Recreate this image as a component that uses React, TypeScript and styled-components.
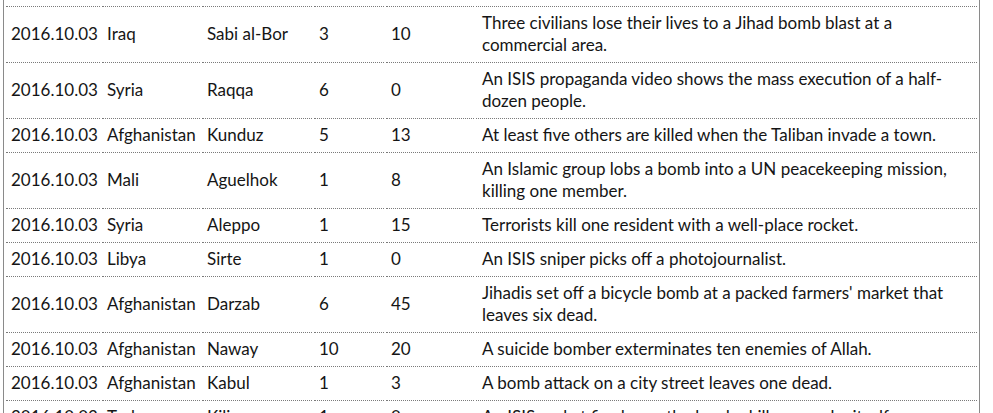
import React from 'react';
import styled, { createGlobalStyle } from 'styled-components';

const GlobalStyle = createGlobalStyle`
	html, body {
		margin: 0;
		padding: 0;
		background: #ffffff;
	}
`;

const Viewport = styled.div`
	height: 413px;
	overflow: hidden;
	padding: 4px 0 0 3px;
	box-sizing: border-box;
	font-family: 'Lato', 'Liberation Sans', sans-serif;
	font-size: 17px;
	color: #151515;
`;

const Table = styled.table`
	width: 977px;
	border-collapse: separate;
	border-spacing: 2px;
	border: 1px solid #8a8a8a;
	border-top: none;
	margin-top: -4px;
	padding-top: 4px;
	table-layout: fixed;
`;

const Col = styled.col<{ $w?: number }>`
	width: ${p => (p.$w ? `${p.$w}px` : 'auto')};
`;

const Cell = styled.td<{ $wide?: boolean }>`
	padding: 5px ${p => (p.$wide ? '6px' : '5px')} 4px;
	line-height: 22px;
	vertical-align: middle;
	border-top: 1px dotted #7a7a7a;
	white-space: ${p => (p.$wide ? 'normal' : 'nowrap')};
`;

interface IAttack {
	date: string;
	country: string;
	city: string;
	killed: number;
	injured: number;
	description: string;
}

const attacks: IAttack[] = [
	{ date: '2016.10.03', country: 'Iraq', city: 'Sabi al-Bor', killed: 3, injured: 10, description: 'Three civilians lose their lives to a Jihad bomb blast at a commercial area.' },
	{ date: '2016.10.03', country: 'Syria', city: 'Raqqa', killed: 6, injured: 0, description: 'An ISIS propaganda video shows the mass execution of a half-dozen people.' },
	{ date: '2016.10.03', country: 'Afghanistan', city: 'Kunduz', killed: 5, injured: 13, description: 'At least five others are killed when the Taliban invade a town.' },
	{ date: '2016.10.03', country: 'Mali', city: 'Aguelhok', killed: 1, injured: 8, description: 'An Islamic group lobs a bomb into a UN peacekeeping mission, killing one member.' },
	{ date: '2016.10.03', country: 'Syria', city: 'Aleppo', killed: 1, injured: 15, description: 'Terrorists kill one resident with a well-place rocket.' },
	{ date: '2016.10.03', country: 'Libya', city: 'Sirte', killed: 1, injured: 0, description: 'An ISIS sniper picks off a photojournalist.' },
	{ date: '2016.10.03', country: 'Afghanistan', city: 'Darzab', killed: 6, injured: 45, description: "Jihadis set off a bicycle bomb at a packed farmers' market that leaves six dead." },
	{ date: '2016.10.03', country: 'Afghanistan', city: 'Naway', killed: 10, injured: 20, description: 'A suicide bomber exterminates ten enemies of Allah.' },
	{ date: '2016.10.03', country: 'Afghanistan', city: 'Kabul', killed: 1, injured: 3, description: 'A bomb attack on a city street leaves one dead.' },
	{ date: '2016.10.03', country: 'Turkey', city: 'Kilis', killed: 1, injured: 0, description: 'An ISIS rocket fired over the border kills a man by itself.' }
];

export default function App() {
	return (
		<>
			<GlobalStyle />
			<Viewport>
				<Table>
					<colgroup>
						<Col $w={94} />
						<Col $w={98} />
						<Col $w={110} />
						<Col $w={70} />
						<Col $w={88} />
						<Col />
					</colgroup>
					<tbody>
						{attacks.map((a, i) => (
							<tr key={i}>
								<Cell>{a.date}</Cell>
								<Cell>{a.country}</Cell>
								<Cell>{a.city}</Cell>
								<Cell>{a.killed}</Cell>
								<Cell>{a.injured}</Cell>
								<Cell $wide>{a.description}</Cell>
							</tr>
						))}
					</tbody>
				</Table>
			</Viewport>
		</>
	);
}
